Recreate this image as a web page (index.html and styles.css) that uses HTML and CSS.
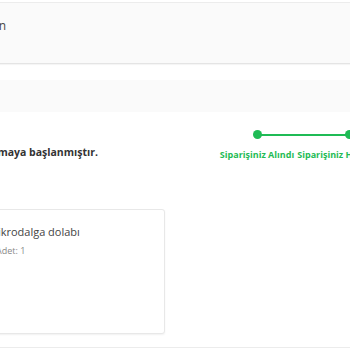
FILE: index.html
```html
<!DOCTYPE html>
<html lang="tr">
<head>
    <meta charset="UTF-8">
    <meta name="viewport" content="width=device-width, initial-scale=1.0">
    <title>Sipariş Detayı</title>
    <link rel="stylesheet" href="styles.css">
</head>
<body>
    <div class="page">
        <!-- sipariş özeti -->
        <div class="summary">
            <div class="summary-text">
                <span>Sipariş No: 12548 &middot; Ödeme tamamlandı, teşekkürler kaan</span>
            </div>
        </div>

        <div class="info-bar"></div>

        <!-- durum satırı -->
        <div class="status-row">
            <div class="status-text">
                <span>Siparişiniz hazırlanmaya başlanmıştır.</span>
            </div>
            <div class="stepper">
                <div class="step done">
                    <span class="dot"></span>
                    <span class="label">Siparişiniz Alındı</span>
                </div>
                <div class="step done">
                    <span class="dot"></span>
                    <span class="label">Siparişiniz Hazırlanıyor</span>
                </div>
            </div>
        </div>

        <!-- ürün kartı -->
        <div class="product-card">
            <p class="product-name">Mikrodalga dolabı</p>
            <p class="product-qty">Adet: 1</p>
        </div>

        <div class="bottom-line"></div>
    </div>
</body>
</html>
```

FILE: styles.css
```css
body {
    margin: 0;
    padding: 0;
    background-color: #fff;
    font-family: "Open Sans", "Liberation Sans", sans-serif;
    color: #333;
    overflow: hidden;
}

.page {
    width: 350px;
    padding-top: 2px;
}

/* özet kutusu */
.summary {
    border-top: 1px solid #ececec;
    height: 62px;
    background-color: #fafafa;
    border-bottom: 1px solid #e4e4e4;
    box-shadow: 0 1px 1px rgba(0, 0, 0, 0.04);
    box-sizing: border-box;
    margin-bottom: 16px;
}

.summary-text {
    display: flex;
    justify-content: flex-end;
    width: 6px;
    padding-top: 15px;
}

.summary-text span {
    font-size: 12px;
    line-height: 16px;
    color: #444;
    white-space: nowrap;
}

.info-bar {
    height: 32px;
    background-color: #fafafa;
}

/* durum */
.status-row {
    display: flex;
    justify-content: space-between;
    align-items: flex-end;
    height: 51px;
}

.status-text {
    display: flex;
    justify-content: flex-end;
    width: 98px;
    padding-bottom: 4px;
}

.status-text span {
    font-size: 10.5px;
    font-weight: 700;
    color: #333;
    white-space: nowrap;
}

.stepper {
    display: flex;
    margin-right: -45px;
    padding-bottom: 2px;
}

.step {
    position: relative;
    width: 92px;
    display: flex;
    flex-direction: column;
    align-items: center;
}

.step .dot {
    width: 9px;
    height: 9px;
    border-radius: 50%;
    background-color: #1fbb55;
    margin-bottom: 9px;
    position: relative;
    z-index: 1;
}

.step + .step::before {
    content: "";
    position: absolute;
    top: 4px;
    left: -46px;
    width: 92px;
    height: 2px;
    background-color: #1fbb55;
}

.step .label {
    font-size: 9px;
    font-weight: 700;
    color: #1fbb55;
    white-space: nowrap;
}

/* ürün kartı */
.product-card {
    width: 175px;
    margin: 46px 0 0 -10px;
    height: 125px;
    box-sizing: border-box;
    background-color: #fff;
    border: 1px solid #e8e8e8;
    border-radius: 3px;
    box-shadow: 0 1px 2px rgba(0, 0, 0, 0.06);
    padding: 14px 0 0 0;
}

.product-name {
    margin: 0 0 0 -3px;
    font-size: 11px;
    color: #444;
}

.product-qty {
    margin: 5px 0 0 5px;
    font-size: 9px;
    color: #888;
}

.bottom-line {
    margin-top: 13px;
    height: 1px;
    background-color: #ececec;
}
```
